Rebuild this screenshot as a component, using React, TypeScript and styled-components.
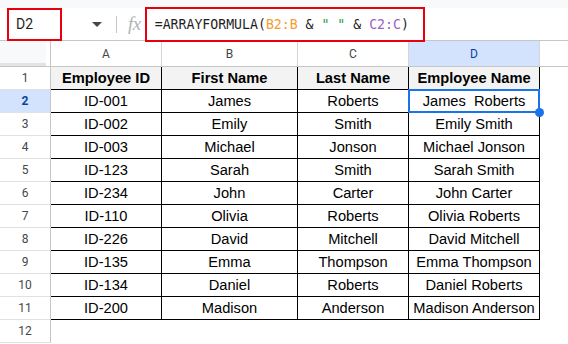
import React from 'react';
import styled, { createGlobalStyle } from 'styled-components';

const GlobalStyle = createGlobalStyle`
  html, body {
    margin: 0;
    padding: 0;
    background: #fff;
  }
  body {
    font-family: 'Liberation Sans', Arial, sans-serif;
    overflow: hidden;
  }
`;

const Page = styled.div`
  width: 568px;
  height: 344px;
  overflow: hidden;
  background: #fff;
`;

const TopStrip = styled.div`
  height: 8px;
  background: #f8f9fb;
`;

const FormulaBar = styled.div`
  display: flex;
  align-items: center;
  height: 32px;
  border-bottom: 1px solid #c4c7c5;
  background: #fff;
`;

const NameBox = styled.div`
  box-sizing: border-box;
  width: 55px;
  height: 33px;
  margin-left: 7px;
  padding-left: 7px;
  display: flex;
  align-items: center;
  border: 2px solid #e8000b;
  font-family: Roboto, 'Liberation Sans', sans-serif;
  font-size: 14px;
  color: #1f1f1f;
`;

const Caret = styled.svg`
  margin-left: 30px;
  flex-shrink: 0;
`;

const Divider = styled.div`
  width: 1px;
  height: 17px;
  margin-left: 14px;
  background: #c4c7c5;
`;

const Fx = styled.span`
  margin-left: 11px;
  font-family: 'Liberation Serif', serif;
  font-style: italic;
  font-size: 19px;
  color: #b0b3b7;
  letter-spacing: -0.5px;
`;

const FormulaBox = styled.div`
  position: relative;
  z-index: 1;
  box-sizing: border-box;
  width: 280px;
  height: 35px;
  margin-left: 4px;
  padding-left: 8px;
  display: flex;
  align-items: center;
  border: 2px solid #e8000b;
  font-family: 'DejaVu Sans Mono', 'Liberation Mono', monospace;
  font-size: 13.2px;
  color: #1f1f1f;
  white-space: pre;
  background: #fff;
`;

const Token = styled.span<{ $tone?: 'range1' | 'range2' | 'text' }>`
  color: ${({ $tone }) =>
    $tone === 'range1' ? '#f29e32' : $tone === 'range2' ? '#9d5ec8' : $tone === 'text' ? '#25a244' : '#1f1f1f'};
`;

const Sheet = styled.div`
  display: grid;
  grid-template-columns: 51px 111px 136px 111px 131px 1fr;
  grid-template-rows: 26px repeat(12, 23px);
`;

const Corner = styled.div`
  box-sizing: border-box;
  border-right: 1px solid #c4c7c5;
  border-bottom: 1px solid #c4c7c5;
  background: #fff;
  display: flex;
`;

const CornerFill = styled.div`
  flex: 1;
  margin-right: 4px;
  background: #f8f9fa;
  border-bottom: 3px solid #e3e3e3;
`;

const ColHeader = styled.div<{ $active?: boolean; $last?: boolean }>`
  box-sizing: border-box;
  display: flex;
  align-items: center;
  justify-content: center;
  border-right: ${({ $last }) => ($last ? 'none' : '1px solid #d5d5d5')};
  border-bottom: 1px solid #c4c7c5;
  background: ${({ $active }) => ($active ? '#d3e3fd' : '#fff')};
  color: ${({ $active }) => ($active ? '#0842a0' : '#444746')};
  font-family: Roboto, 'Liberation Sans', sans-serif;
  font-size: 12px;
  padding-top: 1px;
`;

const RowHeader = styled.div<{ $active?: boolean }>`
  box-sizing: border-box;
  display: flex;
  align-items: center;
  justify-content: center;
  border-right: 1px solid #c4c7c5;
  border-bottom: 1px solid #e1e1e1;
  background: ${({ $active }) => ($active ? '#d3e3fd' : '#fff')};
  color: ${({ $active }) => ($active ? '#0842a0' : '#444746')};
  font-weight: ${({ $active }) => ($active ? 700 : 400)};
  font-family: Roboto, 'Liberation Sans', sans-serif;
  font-size: 12px;
`;

const Cell = styled.div<{ $head?: boolean }>`
  position: relative;
  box-sizing: border-box;
  display: flex;
  align-items: center;
  justify-content: center;
  border-right: 1px solid #000;
  border-bottom: 1px solid #000;
  background: ${({ $head }) => ($head ? '#f3f3f3' : '#fff')};
  font-weight: ${({ $head }) => ($head ? 700 : 400)};
  font-size: 14.67px;
  color: #000;
  white-space: pre;
`;

const Blank = styled.div`
  background: #fff;
`;

const Selection = styled.div`
  position: absolute;
  top: -1px;
  left: -1px;
  right: -1px;
  bottom: -1px;
  border: 2px solid #1a73e8;
  z-index: 2;
  pointer-events: none;
`;

const Handle = styled.div`
  position: absolute;
  right: -6px;
  bottom: -6px;
  width: 9px;
  height: 9px;
  border-radius: 50%;
  background: #1a73e8;
`;

const headers = ['Employee ID', 'First Name', 'Last Name', 'Employee Name'];

const rows: [string, string, string, string][] = [
  ['ID-001', 'James', 'Roberts', 'James  Roberts'],
  ['ID-002', 'Emily', 'Smith', 'Emily Smith'],
  ['ID-003', 'Michael', 'Jonson', 'Michael Jonson'],
  ['ID-123', 'Sarah', 'Smith', 'Sarah Smith'],
  ['ID-234', 'John', 'Carter', 'John Carter'],
  ['ID-110', 'Olivia', 'Roberts', 'Olivia Roberts'],
  ['ID-226', 'David', 'Mitchell', 'David Mitchell'],
  ['ID-135', 'Emma', 'Thompson', 'Emma Thompson'],
  ['ID-134', 'Daniel', 'Roberts', 'Daniel Roberts'],
  ['ID-200', 'Madison', 'Anderson', 'Madison Anderson'],
];

export default function App() {
  return (
    <Page>
      <GlobalStyle />
      <TopStrip />
      <FormulaBar>
        <NameBox>D2</NameBox>
        <Caret width="10" height="5" viewBox="0 0 10 5">
          <path d="M0 0 L10 0 L5 5 Z" fill="#444746" />
        </Caret>
        <Divider />
        <Fx>fx</Fx>
        <FormulaBox>
          <Token>=ARRAYFORMULA(</Token>
          <Token $tone="range1">B2:B</Token>
          <Token> &amp; </Token>
          <Token $tone="text">" "</Token>
          <Token> &amp; </Token>
          <Token $tone="range2">C2:C</Token>
          <Token>)</Token>
        </FormulaBox>
      </FormulaBar>
      <Sheet>
        <Corner>
          <CornerFill />
        </Corner>
        {['A', 'B', 'C', 'D', ''].map((l, i) => (
          <ColHeader key={i} $active={l === 'D'} $last={i === 4}>
            {l}
          </ColHeader>
        ))}

        <RowHeader>1</RowHeader>
        {headers.map((h) => (
          <Cell key={h} $head>
            {h}
          </Cell>
        ))}
        <Blank />

        {rows.map((r, ri) => (
          <React.Fragment key={ri}>
            <RowHeader $active={ri === 0}>{ri + 2}</RowHeader>
            {r.map((v, ci) => (
              <Cell key={ci}>
                {v}
                {ri === 0 && ci === 3 && (
                  <Selection>
                    <Handle />
                  </Selection>
                )}
              </Cell>
            ))}
            <Blank />
          </React.Fragment>
        ))}

        <RowHeader>12</RowHeader>
        <Blank />
        <Blank />
        <Blank />
        <Blank />
        <Blank />
      </Sheet>
    </Page>
  );
}
